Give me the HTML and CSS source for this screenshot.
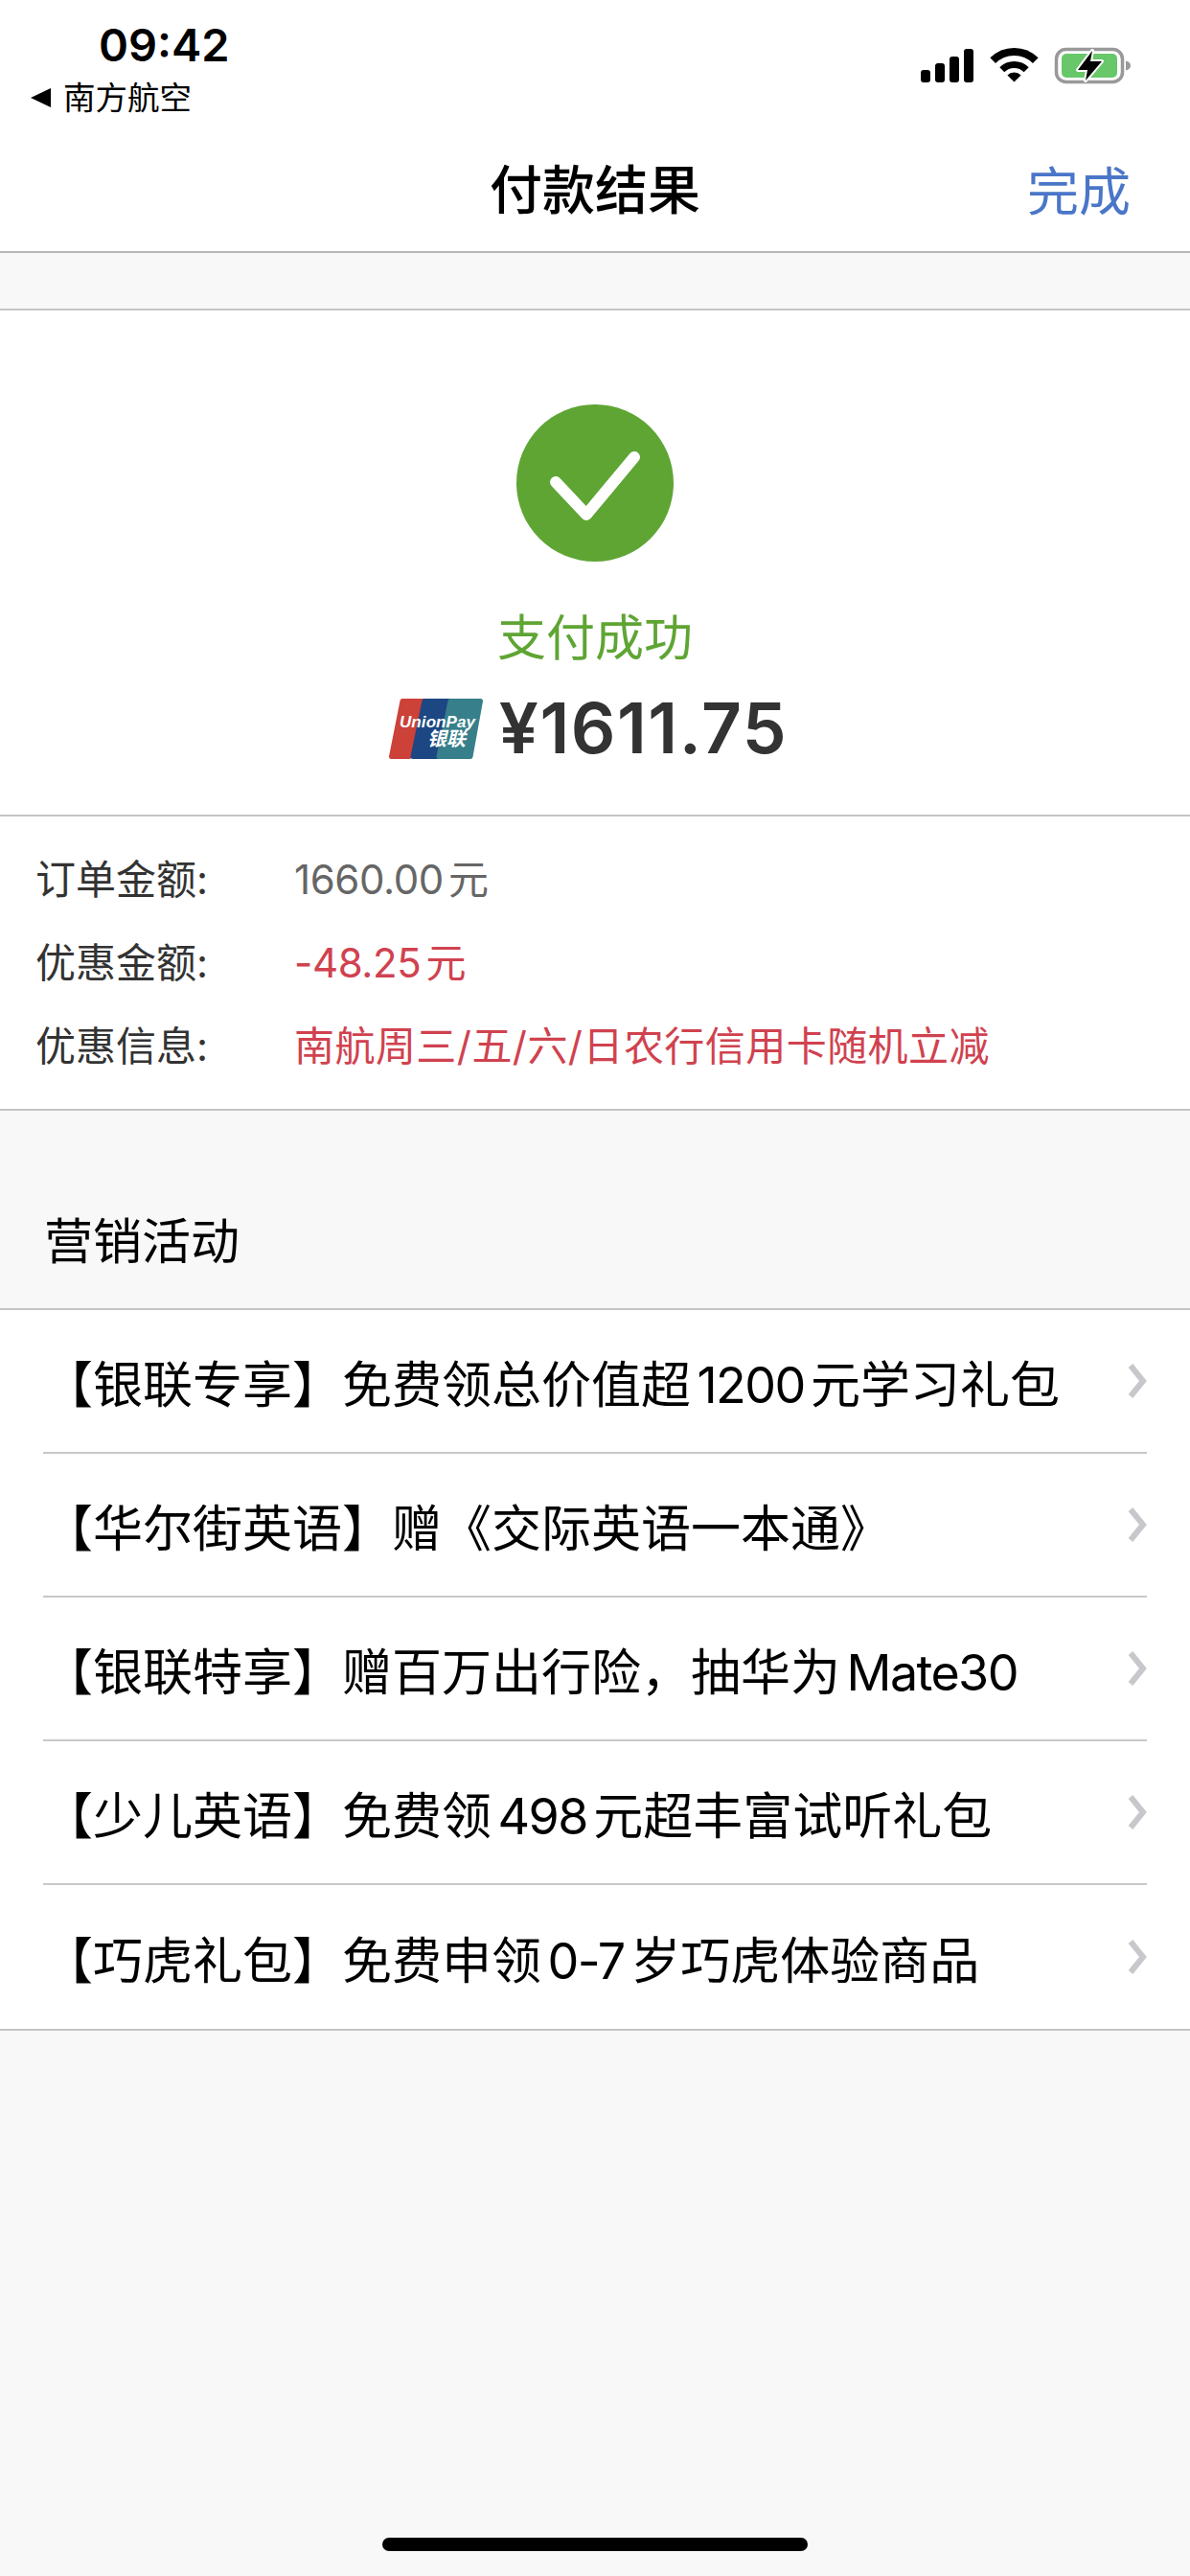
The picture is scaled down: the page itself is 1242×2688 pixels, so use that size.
FILE: index.html
```html
<!DOCTYPE html>
<html lang="zh-CN">

<head>
    <meta name="viewport" content="width=device-width, initial-scale=1">
    <meta charset="UTF-8">
    <title>付款结果</title>

    <link rel="stylesheet" href="styles.css">
</head>

<body>
    <header class="top-bar">
        <div class="status-bar">
            <div class="status-left">
                <div class="clock">09:42</div>
                <div class="back-app"><span class="back-arrow"></span>南方航空</div>
            </div>
            <svg class="status-icons" width="220" height="40" viewBox="0 0 220 40">
                <rect x="0" y="24" width="10" height="13" rx="3" />
                <rect x="15" y="17" width="10" height="20" rx="3" />
                <rect x="30" y="10" width="10" height="27" rx="3" />
                <rect x="45" y="2" width="10" height="35" rx="3" />
                <path d="M75.2 14.2A31.5 31.5 0 0 1 119.8 14.2" fill="none" stroke="#000" stroke-width="8" />
                <path d="M84.8 23.8A18 18 0 0 1 110.2 23.8" fill="none" stroke="#000" stroke-width="7" />
                <path d="M97.5 36.5L90.4 29.4A10 10 0 0 1 104.6 29.4Z" />
                <rect x="141.5" y="2.5" width="69" height="34" rx="10" fill="none" stroke="#999" stroke-width="3.5" />
                <rect x="147" y="7" width="58" height="25" rx="5" fill="#68c769" />
                <path d="M214 14.5C217 15 219 17 219 19.5C219 22 217 24 214 24.5Z" fill="#999" />
                <path d="M179 4L164 24H174L172 35L189 15H177Z" stroke="#fff" stroke-width="4" paint-order="stroke" stroke-linejoin="round" />
            </svg>
        </div>
        <nav class="nav-bar">
            <span></span>
            <h1 class="nav-title">付款结果</h1>
            <a class="nav-action">完成</a>
        </nav>
    </header>

    <div class="spacer"></div>

    <section class="result">
        <svg class="result-icon" width="164" height="164" viewBox="0 0 164 164">
            <circle cx="82" cy="82" r="82" fill="#5fa534" />
            <path d="M41 81L73 115L123 55" fill="none" stroke="#fff" stroke-width="12" stroke-linecap="round" stroke-linejoin="round" />
        </svg>
        <div class="result-text">支付成功</div>
        <div class="result-amount">
            <svg class="unionpay" width="98" height="63" viewBox="0 0 98 63">
                <path d="M14 2.5H36L21 60.5H2.5Z" fill="#cc4138" stroke="#cc4138" stroke-width="5" stroke-linejoin="round" />
                <path d="M37 2.5H63L51 60.5H25Z" fill="#1c4783" stroke="#1c4783" stroke-width="5" stroke-linejoin="round" />
                <path d="M64 2.5H95.5L85 60.5H52Z" fill="#377f8b" stroke="#377f8b" stroke-width="5" stroke-linejoin="round" />
                <text x="11" y="30" class="up-latin" textLength="79">UnionPay</text>
                <text x="40" y="49" class="up-cjk">银联</text>
            </svg>
            <span class="amount">¥1611.75</span>
        </div>
    </section>

    <section class="details">
        <div class="detail-row">
            <span class="detail-label">订单金额:</span>
            <span class="detail-value">1660.00元</span>
        </div>
        <div class="detail-row">
            <span class="detail-label">优惠金额:</span>
            <span class="detail-value red">-48.25元</span>
        </div>
        <div class="detail-row">
            <span class="detail-label">优惠信息:</span>
            <span class="detail-value red wide">南航周三/五/六/日农行信用卡随机立减</span>
        </div>
    </section>

    <div class="section-title">营销活动</div>

    <ul class="promo-list">
        <li class="promo">
            <span>【银联专享】免费领总价值超<span class="num">1200</span>元学习礼包</span>
            <svg class="chevron" width="20" height="36" viewBox="0 0 20 36"><path d="M3 2L16 18L3 34" /></svg>
        </li>
        <li class="promo">
            <span>【华尔街英语】赠《交际英语一本通》</span>
            <svg class="chevron" width="20" height="36" viewBox="0 0 20 36"><path d="M3 2L16 18L3 34" /></svg>
        </li>
        <li class="promo">
            <span>【银联特享】赠百万出行险，抽华为<span class="num">Mate30</span></span>
            <svg class="chevron" width="20" height="36" viewBox="0 0 20 36"><path d="M3 2L16 18L3 34" /></svg>
        </li>
        <li class="promo">
            <span>【少儿英语】免费领<span class="num">498</span>元超丰富试听礼包</span>
            <svg class="chevron" width="20" height="36" viewBox="0 0 20 36"><path d="M3 2L16 18L3 34" /></svg>
        </li>
        <li class="promo">
            <span>【巧虎礼包】免费申领<span class="num">0-7</span>岁巧虎体验商品</span>
            <svg class="chevron" width="20" height="36" viewBox="0 0 20 36"><path d="M3 2L16 18L3 34" /></svg>
        </li>
    </ul>

    <div class="home-bar"></div>
</body>

</html>
```

FILE: styles.css
```css
* {
    box-sizing: border-box;
}

body {
    display: flex;
    flex-direction: column;
    min-height: 100vh;
    margin: 0;
    padding: 0;
    background: #f8f8f8;
    color: #000;
    font-family: Inter, "Noto Sans CJK SC", sans-serif;
    text-autospace: normal;
}

.top-bar {
    height: 264px;
    background: #fff;
    border-bottom: 2px solid #b8b8b8;
}

.status-bar {
    display: flex;
    justify-content: space-between;
    height: 130px;
    padding: 23px 61px 0 32px;
}

.clock {
    margin-left: 71px;
    font-size: 47px;
    font-weight: 600;
    line-height: 48px;
}

.back-app {
    display: flex;
    align-items: center;
    margin-top: 9px;
    font-size: 33.5px;
    line-height: 44px;
}

.back-arrow {
    width: 0;
    height: 0;
    margin-right: 13px;
    border-top: 10px solid transparent;
    border-bottom: 10px solid transparent;
    border-right: 21px solid #000;
}

.status-icons {
    margin-top: 26px;
}

.nav-bar {
    display: grid;
    grid-template-columns: 1fr auto 1fr;
    align-items: center;
    height: 132px;
    padding: 0 62px;
}

.nav-title {
    margin: 0 0 4px;
    font-size: 55px;
    font-weight: 500;
}

.nav-action {
    justify-self: end;
    color: #4a76c8;
    font-size: 54px;
}

.spacer {
    height: 58px;
}

.result {
    display: flex;
    flex-direction: column;
    align-items: center;
    height: 530px;
    padding-top: 98px;
    background: #fff;
    border-top: 2px solid #c4c4c4;
    border-bottom: 2px solid #c4c4c4;
}

.result-text {
    margin-top: 47px;
    color: #5fa534;
    font-size: 51px;
    line-height: 66px;
}

.result-amount {
    display: flex;
    align-items: center;
    gap: 17px;
    margin-top: 18px;
    margin-right: 14px;
}

.amount {
    color: #333;
    font-size: 73px;
    font-weight: 600;
    letter-spacing: 1.5px;
    line-height: 86px;
}

.up-latin {
    fill: #fff;
    font-family: "Liberation Sans", sans-serif;
    font-size: 17px;
    font-style: italic;
    font-weight: 700;
}

.up-cjk {
    fill: #fff;
    font-size: 20px;
    font-style: italic;
    font-weight: 700;
}

.details {
    padding: 19px 37px 25px;
    background: #fff;
    border-bottom: 2px solid #c4c4c4;
}

.detail-row {
    display: flex;
    align-items: center;
    height: 87px;
    font-size: 42px;
}

.detail-label {
    width: 270px;
    color: #333;
    text-autospace: no-autospace;
}

.detail-value {
    color: #666;
    letter-spacing: -0.4px;
}

.red {
    color: #d0424f;
}

.detail-value.wide {
    letter-spacing: 0.45px;
}

.section-title {
    display: flex;
    align-items: center;
    height: 206px;
    padding: 60px 46px 0;
    font-size: 51px;
}

.promo-list {
    margin: 0;
    padding: 0 0 0 45px;
    list-style: none;
    background: #fff;
    border-top: 2px solid #c4c4c4;
    border-bottom: 2px solid #c4c4c4;
}

.promo {
    display: flex;
    justify-content: space-between;
    align-items: center;
    height: 150px;
    margin-right: 45px;
    border-bottom: 2px solid #c8c8c8;
    font-size: 52px;
}

.promo:last-child {
    border-bottom: none;
}

.num {
    letter-spacing: -1.6px;
}

.chevron {
    flex: none;
}

.chevron path {
    fill: none;
    stroke: #c7c7cc;
    stroke-width: 6;
}

.home-bar {
    flex: none;
    align-self: center;
    width: 444px;
    height: 14px;
    margin-top: auto;
    margin-bottom: 26px;
    background: #000;
    border-radius: 7px;
}
```
